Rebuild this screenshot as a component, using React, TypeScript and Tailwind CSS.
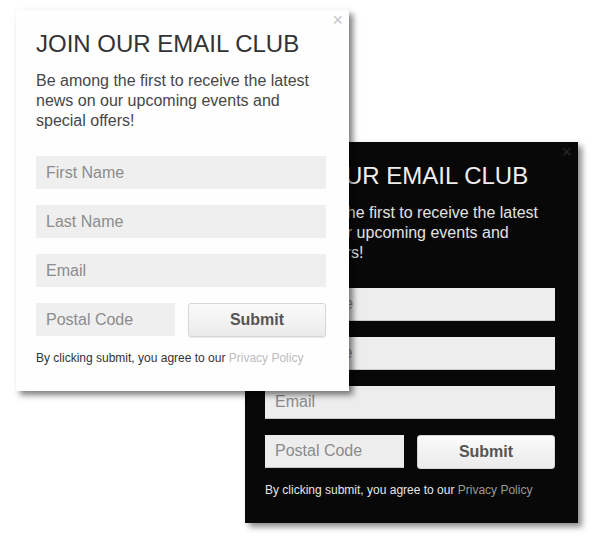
import React from "react";

const font = { fontFamily: '"Liberation Sans", Arial, sans-serif' };

function SignupCard({ dark = false }: { dark?: boolean }) {
  const field = dark
    ? "h-[33px] bg-[#ededed] border-b border-[#c9c9c9] px-[10px] flex items-center text-[16px] text-[#8a8a8a]"
    : "h-[33px] bg-[#efefef] px-[10px] flex items-center text-[16px] text-[#8c8c8c]";

  return (
    <div
      className={`relative w-[333px] h-[381px] px-[20px] pt-[20px] ${
        dark
          ? "bg-[#080808] shadow-[4px_4px_6px_rgba(0,0,0,0.45)]"
          : "bg-[#fefefe] shadow-[4px_4px_6px_rgba(0,0,0,0.5)]"
      }`}
    >
      {/* close */}
      <span
        className={`absolute right-[6px] top-[1px] text-[18px] leading-none ${
          dark ? "text-[#262626]" : "text-[#c4c4c4]"
        }`}
      >
        ×
      </span>

      <h2
        className={`text-[24px] leading-[28px] font-normal ${
          dark ? "text-[#eeeeee]" : "text-[#333333]"
        }`}
      >
        JOIN OUR EMAIL CLUB
      </h2>
      <p
        className={`mt-[13px] text-[16px] leading-[20px] ${
          dark ? "text-[#e2e2e2]" : "text-[#474747]"
        }`}
      >
        Be among the first to receive the latest news on our upcoming events and special
        offers!
      </p>

      <div className="mt-[25px] flex flex-col gap-[16px] w-[290px]">
        <div className={field}>First Name</div>
        <div className={field}>Last Name</div>
        <div className={field}>Email</div>
        <div className="flex gap-[13px]">
          <div className={`${field} w-[139px]`}>Postal Code</div>
          <div className="h-[34px] flex-1 flex items-center justify-center rounded-[3px] border border-[#d6d6d6] bg-gradient-to-b from-[#fbfbfb] to-[#ebebeb] text-[16px] font-bold text-[#555555] shadow-[0_1px_1px_rgba(0,0,0,0.08)]">
            Submit
          </div>
        </div>
      </div>

      <p
        className={`mt-[13px] text-[12px] leading-[16px] ${
          dark ? "text-[#e6e6e6]" : "text-[#333333]"
        }`}
      >
        By clicking submit, you agree to our{" "}
        <span className={dark ? "text-[#9a9a9a]" : "text-[#bdbdbd]"}>Privacy Policy</span>
      </p>
    </div>
  );
}

export default function App() {
  return (
    <div className="relative w-[600px] h-[539px] bg-white overflow-hidden" style={font}>
      <div className="absolute left-[245px] top-[142px]">
        <SignupCard dark />
      </div>
      <div className="absolute left-[16px] top-[10px]">
        <SignupCard />
      </div>
    </div>
  );
}
